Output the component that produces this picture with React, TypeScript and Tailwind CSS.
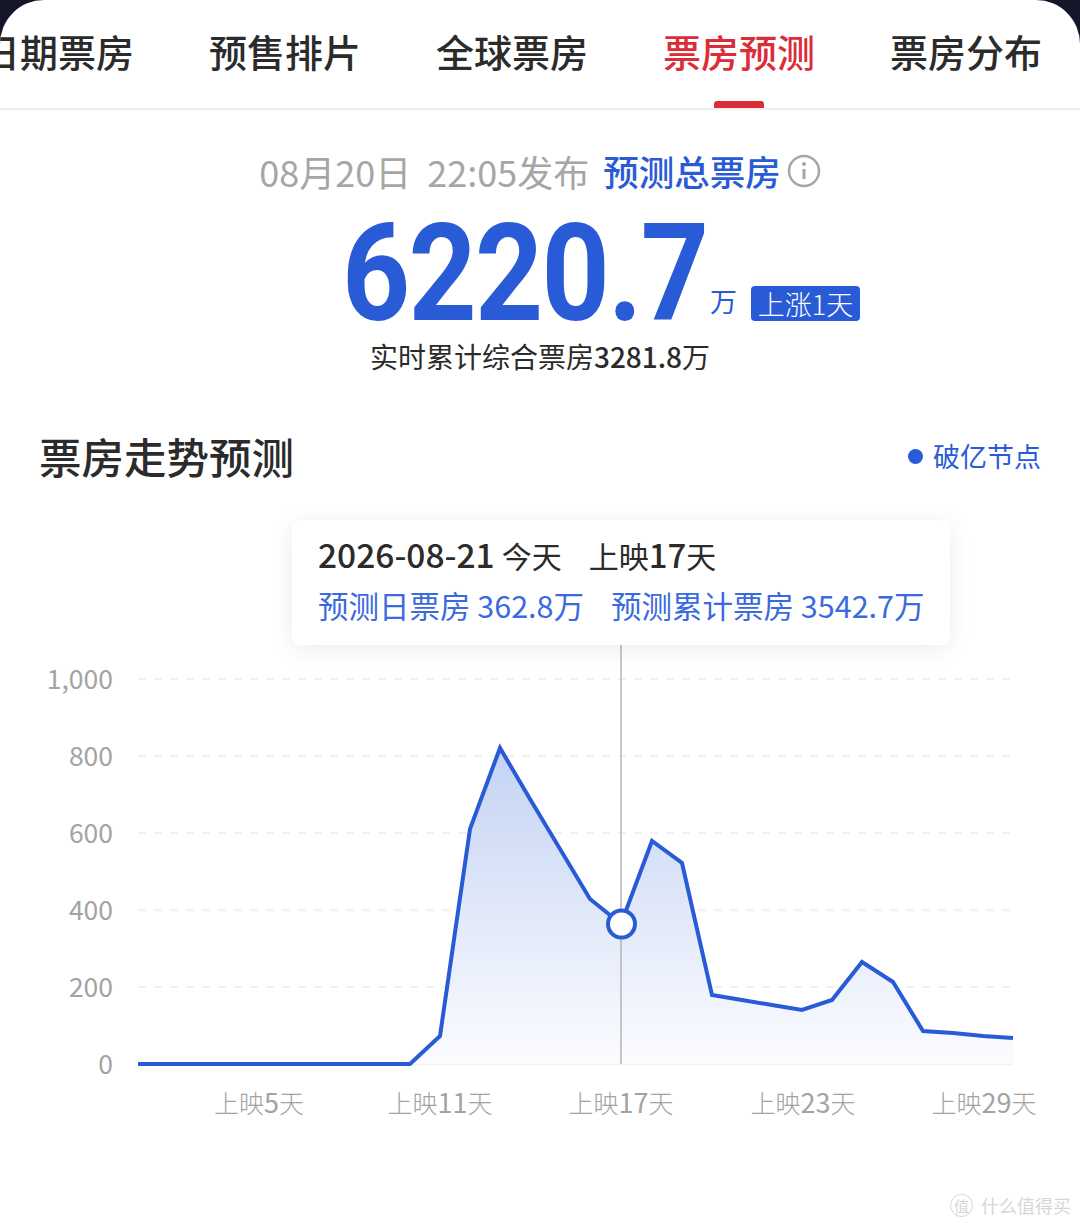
const cjk = { fontFamily: '"Noto Sans CJK SC", sans-serif' }

const tabs = ['日期票房', '预售排片', '全球票房', '票房预测', '票房分布']
const yTicks = [
  { label: '1,000', y: 679 },
  { label: '800', y: 756 },
  { label: '600', y: 833 },
  { label: '400', y: 910 },
  { label: '200', y: 987 },
]
const xTicks = [
  { days: '5', x: 259 },
  { days: '11', x: 440 },
  { days: '17', x: 621 },
  { days: '23', x: 803 },
  { days: '29', x: 984 },
]
const points =
  '138,1064 410,1064 440,1036 470,829 500,748 530,799 560,849 590,899 621,924 652,841 682,863 712,995 742,1000 772,1005 802,1010 832,1000 862,962 893,982 923,1031 953,1033 983,1036 1013,1038'

function Chart() {
  return (
    <svg className="block w-[1080px] h-[626px]" viewBox="0 510 1080 626" style={cjk}>
      <defs>
        <linearGradient id="area" x1="0" y1="748" x2="0" y2="1064" gradientUnits="userSpaceOnUse">
          <stop offset="0" stopColor="#c4d3f3" />
          <stop offset="1" stopColor="#fbfcff" />
        </linearGradient>
      </defs>
      {yTicks.map((t) => (
        <g key={t.label}>
          <line x1="138" x2="1013" y1={t.y} y2={t.y} stroke="#ededed" strokeWidth="1.5" strokeDasharray="8 8" />
          <text x="113" y={t.y + 10} textAnchor="end" fontSize="26.5" fill="#a3a3a3">{t.label}</text>
        </g>
      ))}
      <line x1="138" x2="1013" y1="1064" y2="1064" stroke="#ededed" strokeWidth="1.5" />
      <text x="113" y="1074" textAnchor="end" fontSize="26.5" fill="#a3a3a3">0</text>
      {xTicks.map((t) => (
        <text key={t.days} x={t.x} y="1113" textAnchor="middle" fontSize="25" fontWeight="300" fill="#a3a3a3">
          上映<tspan fontWeight="400" fontSize="27">{t.days}</tspan>天
        </text>
      ))}
      <polygon points={`${points} 1013,1064`} fill="url(#area)" />
      <line x1="621" x2="621" y1="645" y2="1064" stroke="#b4b4b4" strokeWidth="1.5" />
      <polyline points={points} fill="none" stroke="#2a5bd7" strokeWidth="4" strokeLinejoin="miter" />
      <circle cx="621.5" cy="924" r="13.5" fill="#fff" stroke="#2a5bd7" strokeWidth="4" />
    </svg>
  )
}

export default function App() {
  return (
    <div className="w-[1080px] h-[1226px] bg-[#16162a] overflow-hidden" style={cjk}>
      <div className="relative w-full h-full bg-white rounded-t-[44px] overflow-hidden">
        {/* Tabs */}
        <div className="relative h-[110px] border-b-2 border-[#eeeeee] pt-[25px]">
          <div className="flex -ml-[18px] gap-[75px]">
            {tabs.map((t) => (
              <div key={t} className={`w-[152px] shrink-0 text-[38px] leading-[52px] font-medium whitespace-nowrap ${t === '票房预测' ? 'text-[#db2c38]' : 'text-[#2b2b2b]'}`}>
                {t}
              </div>
            ))}
          </div>
          <div className="absolute left-[714px] bottom-0 w-[50px] h-[7px] bg-[#db2c38] rounded-t-[3px]" />
        </div>

        {/* Summary */}
        <div className="flex items-center justify-center h-[50px] mt-[36px] leading-[50px]">
          <span className="text-[#a6a6a6] text-[36px] mr-[14px]">08月20日&nbsp; 22:05发布</span>
          <span className="text-[#2a5bd7] font-medium text-[35.5px]">预测总票房</span>
          <svg className="ml-[6px]" width="34" height="34" viewBox="0 0 34 34" fill="none">
            <circle cx="17" cy="17" r="15" stroke="#a6a6a6" strokeWidth="2.5" />
            <circle cx="17" cy="10" r="2" fill="#a6a6a6" />
            <path d="M17 15v10" stroke="#a6a6a6" strokeWidth="3" />
          </svg>
        </div>
        <div className="relative h-[120px] mt-[18px] flex items-end">
          <div className="ml-[342px] w-[365px] h-[120px] leading-[120px] text-[136px] font-bold text-[#2a5bd7] whitespace-nowrap origin-left scale-x-[0.875] tracking-[-2px]" style={{ fontFamily: 'Roboto, sans-serif' }}>
            6220.7
          </div>
          <span className="ml-[3px] mb-[15px] text-[27px] leading-[36px] text-[#2a5bd7]">万</span>
          <span className="ml-[14px] mb-[13px] w-[109px] h-[35px] rounded-[4px] bg-[#2a5bd7] text-white text-[27px] leading-[35px] text-center font-light whitespace-nowrap">上涨1天</span>
        </div>
        <div className="mt-[2px] text-center text-[28px] leading-[40px] text-[#2b2b2b]">
          实时累计综合票房<span className="font-medium">3281.8</span>万
        </div>

        {/* Title */}
        <div className="flex items-center justify-between px-[39px] mt-[48px] h-[64px]">
          <h2 className="text-[42.5px] leading-[64px] font-medium text-[#2b2b2b]">票房走势预测</h2>
          <div className="flex items-center text-[27px] text-[#2a5bd7]">
            <span className="w-[15px] h-[15px] rounded-full bg-[#2a5bd7] mr-[10px]" />
            破亿节点
          </div>
        </div>

        {/* Chart */}
        <div className="relative mt-[22px]">
          <Chart />
          <div className="absolute left-[292px] top-[10px] w-[658px] h-[125px] bg-white rounded-[8px] shadow-[0_4px_24px_rgba(0,0,0,0.08)] pl-[26px] pt-[10px]">
            <div className="flex items-baseline text-[30px] leading-[48px] text-[#2b2b2b] whitespace-nowrap">
              <span className="font-medium text-[33.5px]">2026-08-21</span>
              <span className="ml-[7px]">今天</span>
              <span className="ml-[27px]">上映</span>
              <span className="font-medium text-[33px]">17</span>
              <span>天</span>
            </div>
            <div className="flex text-[30.5px] leading-[52px] text-[#3b6ae0] whitespace-nowrap">
              <span>预测日票房 362.8万</span>
              <span className="ml-[27px]">预测累计票房 3542.7万</span>
            </div>
          </div>
        </div>

        {/* Watermark */}
        <div className="absolute right-[9px] bottom-[9px] flex items-center gap-[8px] text-[#d6d6d6] text-[18px] leading-[24px]">
          <span className="w-[23px] h-[23px] rounded-full border border-[#d6d6d6] text-[15px] leading-[21px] text-center">值</span>
          什么值得买
        </div>
      </div>
    </div>
  )
}
